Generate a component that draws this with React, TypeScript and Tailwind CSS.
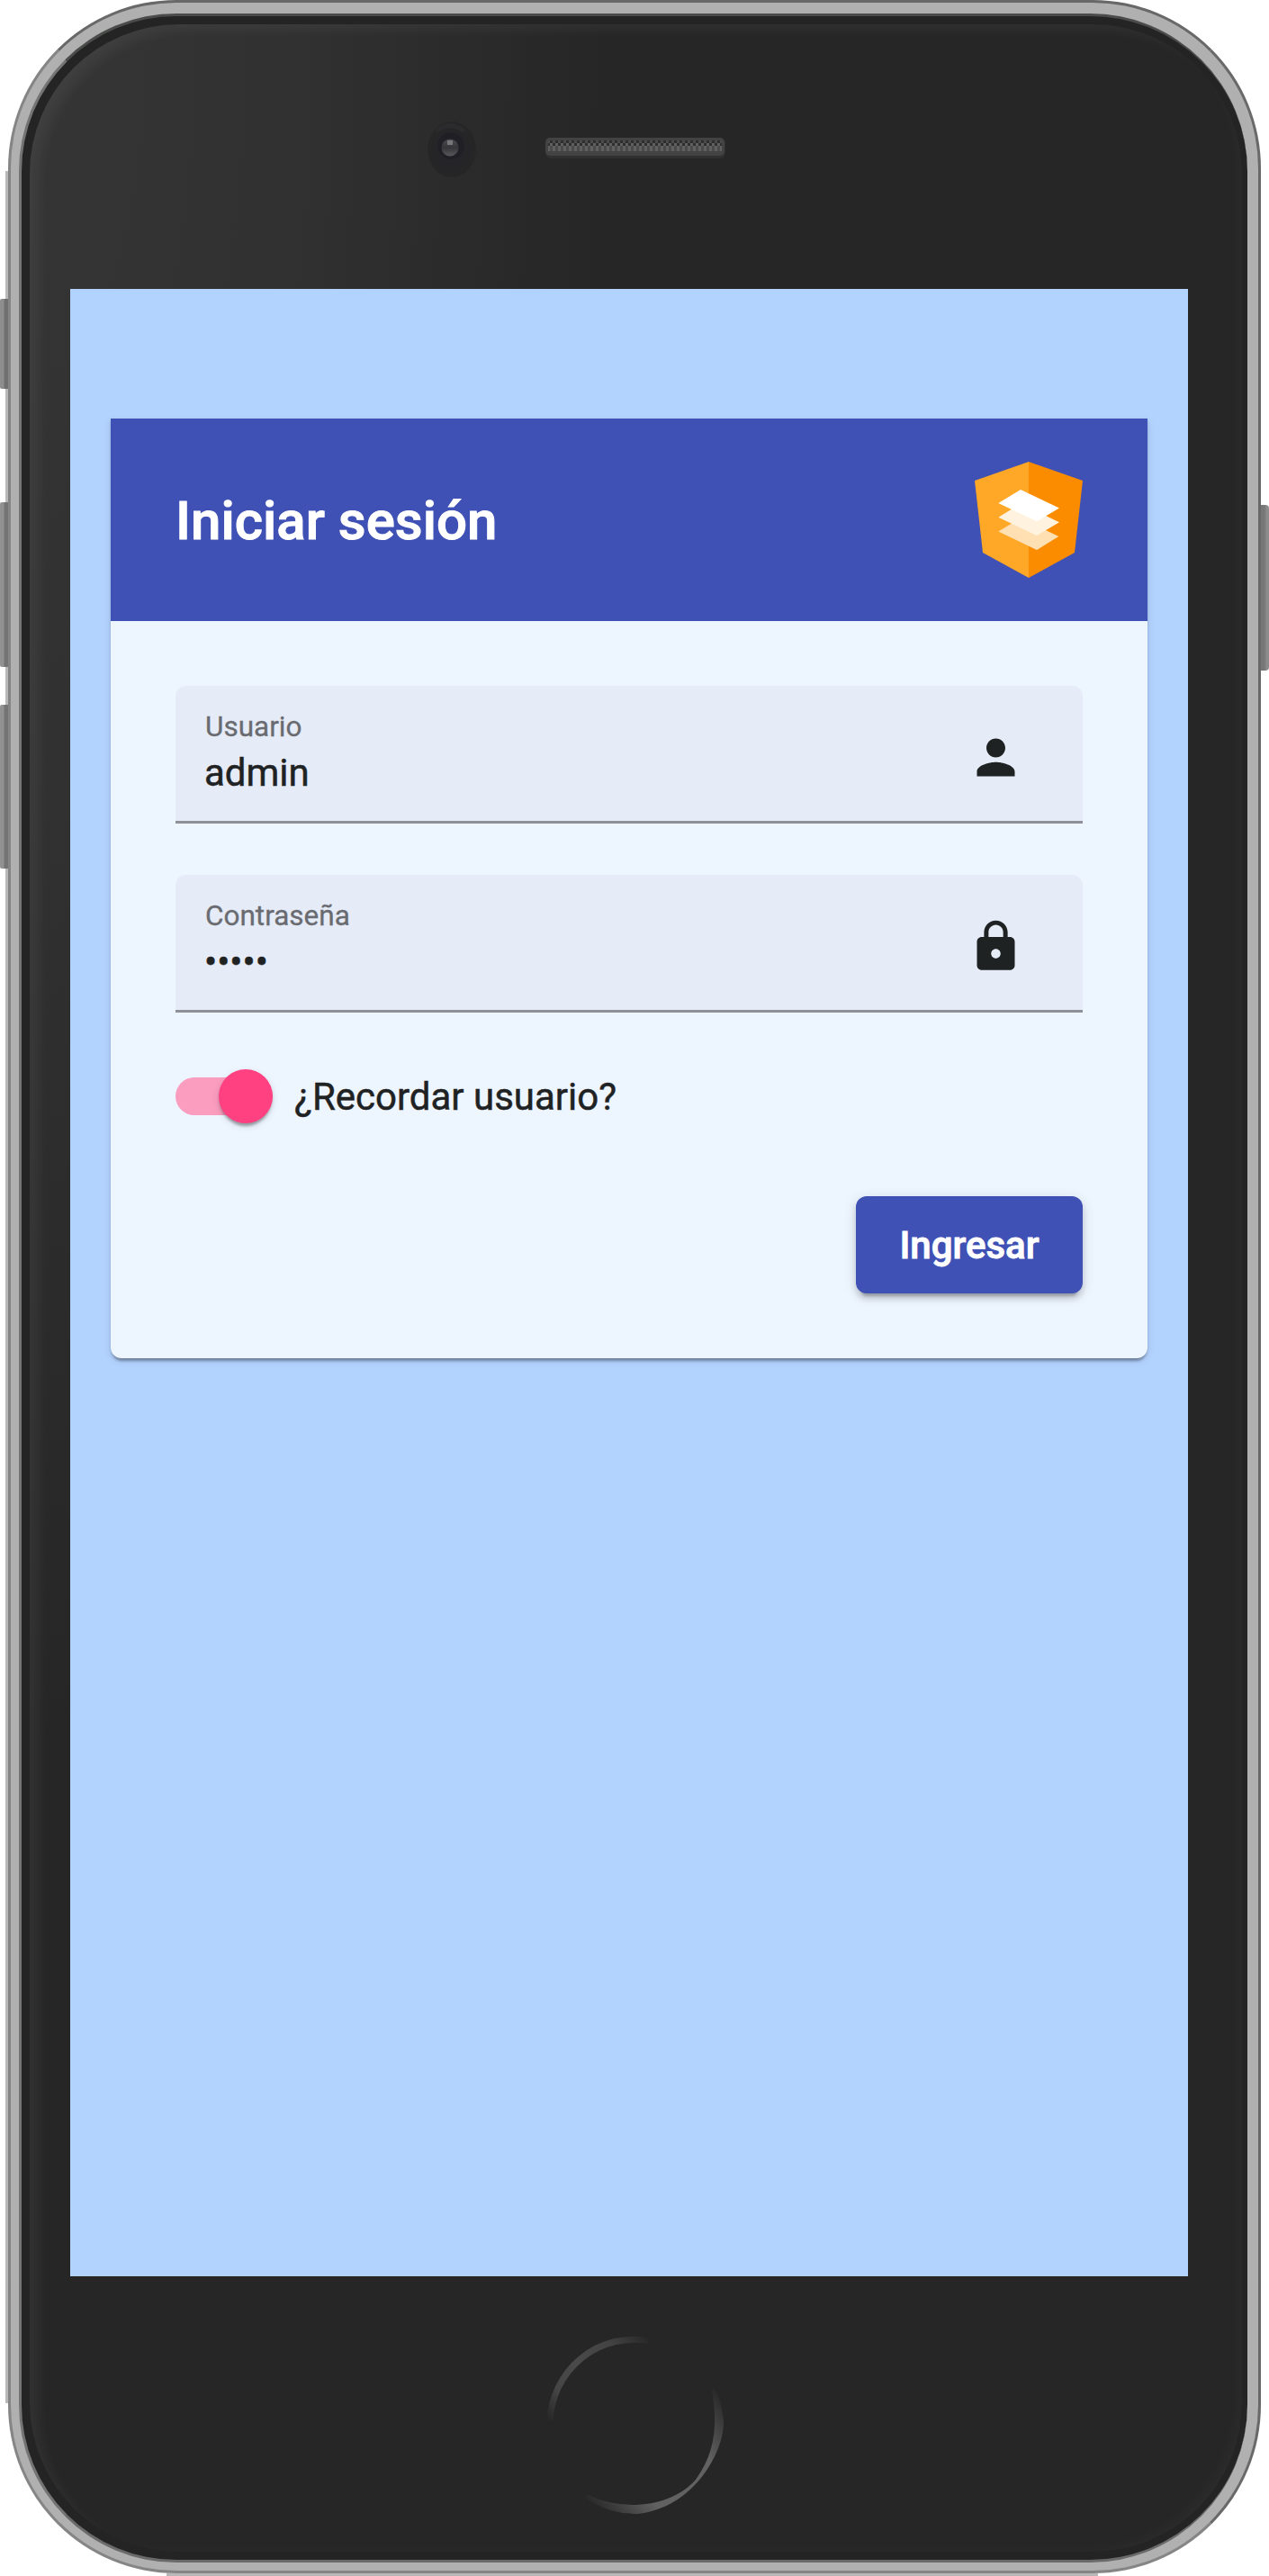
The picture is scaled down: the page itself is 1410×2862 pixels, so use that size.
import type { ReactNode } from "react";

function Logo() {
  return (
    <svg width="120" height="129" viewBox="0 0 120 129" aria-hidden="true">
      <path d="M60 0L0 21L9 101L60 129Z" fill="#ffa726" />
      <path d="M60 0L120 21L111 101L60 129Z" fill="#fb8c00" />
      <path d="M26.3 77.5L51 62.5L93.3 83L69 98Z" fill="#ffe0b2" />
      <path d="M26.3 61.7L51 46.5L94 67.3L69 82Z" fill="#fff3e0" />
      <path d="M26.3 46L51 31L94 51.5L69 66.3Z" fill="#fff" />
    </svg>
  );
}

function PersonIcon() {
  return (
    <svg width="63" height="63" viewBox="0 0 24 24" fill="#1f2223" aria-hidden="true">
      <path d="M12 12c2.21 0 4-1.79 4-4s-1.79-4-4-4-4 1.79-4 4 1.79 4 4 4zm0 2c-2.67 0-8 1.34-8 4v2h16v-2c0-2.66-5.33-4-8-4z" />
    </svg>
  );
}

function LockIcon() {
  return (
    <svg width="63" height="63" viewBox="0 0 24 24" fill="#1f2223" aria-hidden="true">
      <path d="M18 8h-1V6c0-2.76-2.24-5-5-5S7 3.24 7 6v2H6c-1.1 0-2 .9-2 2v10c0 1.1.9 2 2 2h12c1.1 0 2-.9 2-2V10c0-1.1-.9-2-2-2zm-6 9c-1.1 0-2-.9-2-2s.9-2 2-2 2 .9 2 2-.9 2-2 2zm3.1-9H8.9V6c0-1.71 1.39-3.1 3.1-3.1s3.1 1.39 3.1 3.1v2z" />
    </svg>
  );
}

type FieldProps = { label: string; value: string; type: string; icon: ReactNode };

function Field({ label, value, type, icon }: FieldProps) {
  return (
    <label className="flex h-[153px] items-start justify-between rounded-t-[12px] border-b-[3px] border-[#8f9198] bg-[#e5ebf7] pt-[27px] pr-[65px] pl-[32px]">
      <span className="flex flex-1 flex-col gap-[9px]">
        <span className="pt-px pl-px text-[31.5px] leading-[36px] text-[#696b70] [-webkit-text-stroke:0.3px_#696b70]">{label}</span>
        <input
          type={type}
          defaultValue={value}
          className="h-[48px] w-full bg-transparent p-0 text-[42px] leading-[48px] text-[#1f2223] outline-none [-webkit-text-stroke:0.5px_#1f2223]"
        />
      </span>
      <span className="mt-[21px]">{icon}</span>
    </label>
  );
}

function LoginCard() {
  return (
    <div className="rounded-b-[12px] bg-[#edf5ff] shadow-[0_6px_3px_-3px_rgba(0,0,0,0.2),0_3px_3px_rgba(0,0,0,0.14),0_3px_9px_rgba(0,0,0,0.12)]">
      <header className="flex h-[225px] items-center justify-between bg-[#3f51b5] px-[72px]">
        <h1 className="pt-[3px] text-[60px] font-medium text-white [-webkit-text-stroke:1px_#fff]">Iniciar sesión</h1>
        <Logo />
      </header>
      <form className="flex flex-col p-[72px]">
        <div className="flex flex-col gap-[57px]">
          <Field label="Usuario" value="admin" type="text" icon={<PersonIcon />} />
          <Field label="Contraseña" value="admin" type="password" icon={<LockIcon />} />
        </div>
        <div className="mt-[63px] flex h-[60px] items-center gap-6">
          <span className="flex h-[42px] w-[108px] items-center justify-end rounded-full bg-[#fa9dbf]">
            <span className="h-[60px] w-[60px] rounded-full bg-[#ff4081] shadow-[0_6px_3px_-3px_rgba(0,0,0,0.2),0_3px_3px_rgba(0,0,0,0.14),0_3px_9px_rgba(0,0,0,0.12)]" />
          </span>
          <span className="pt-px text-[42px] leading-[60px] text-[#1f2223] [-webkit-text-stroke:0.5px_#1f2223]">¿Recordar usuario?</span>
        </div>
        <button
          type="button"
          className="mt-[81px] h-[108px] w-[252px] self-end rounded-[12px] bg-[#3f51b5] text-[42px] font-medium text-white shadow-[0_9px_3px_-6px_rgba(0,0,0,0.2),0_6px_6px_rgba(0,0,0,0.14),0_3px_15px_rgba(0,0,0,0.12)] [-webkit-text-stroke:0.9px_#fff]"
        >
          Ingresar
        </button>
      </form>
    </div>
  );
}

function SpeakerAndCamera() {
  return (
    <svg width="400" height="110" viewBox="0 0 400 110" aria-hidden="true">
      <defs>
        <pattern id="mesh" width="6" height="12" patternUnits="userSpaceOnUse" y="1">
          <rect width="6" height="12" fill="#4b4b4b" />
          <path d="M0 0h3v3h-3zM3 9h3v3h-3z" fill="#2e2e2e" />
          <path d="M3 0h3v3h-3zM0 3h3v6h-3z" fill="#606060" />
        </pattern>
        <radialGradient id="lensHalo">
          <stop offset="0" stopColor="#222128" />
          <stop offset=".5" stopColor="#252529" />
          <stop offset="1" stopColor="#262626" />
        </radialGradient>
        <linearGradient id="lens" x2="0" y2="1">
          <stop offset="0" stopColor="#4c4c50" />
          <stop offset=".5" stopColor="#35353a" />
          <stop offset="1" stopColor="#58585c" />
        </linearGradient>
      </defs>
      <ellipse cx="62" cy="56" rx="27" ry="31" fill="url(#lensHalo)" />
      <path d="M45 36Q60 23 76 36" fill="none" stroke="#2b2b2e" strokeWidth="5" />
      <circle cx="61" cy="52" r="14.5" fill="#201f26" />
      <circle cx="60" cy="54" r="9.5" fill="url(#lens)" />
      <rect x="57" y="46" width="6" height="5" fill="#777779" />
      <rect x="166" y="43" width="200" height="23" rx="6" fill="#303030" />
      <rect x="166" y="43" width="199" height="20" rx="5" fill="#434343" />
      <rect x="169" y="46" width="193" height="12" fill="url(#mesh)" />
    </svg>
  );
}

function HomeButton() {
  return (
    <svg width="200" height="204" viewBox="0 0 200 204" aria-hidden="true">
      <defs>
        <linearGradient id="arcTop" gradientUnits="userSpaceOnUse" x1="5" y1="97" x2="115" y2="5">
          <stop offset="0" stopColor="#272727" />
          <stop offset=".2" stopColor="#454545" />
          <stop offset=".45" stopColor="#4a4a4a" />
          <stop offset=".75" stopColor="#434343" />
          <stop offset="1" stopColor="#272727" />
        </linearGradient>
        <linearGradient id="arcBottom" gradientUnits="userSpaceOnUse" x1="44" y1="184" x2="190" y2="62">
          <stop offset="0" stopColor="#272727" />
          <stop offset=".3" stopColor="#616161" />
          <stop offset=".7" stopColor="#626262" />
          <stop offset="1" stopColor="#282828" />
        </linearGradient>
      </defs>
      <path d="M6 97A93.5 95 0 0 1 115 8.5" fill="none" stroke="url(#arcTop)" strokeWidth="7" />
      <path
        d="M188 61Q196 70 199 98C200 130 168 193 104 201C86 201 68 198 46 184L48 180Q75 192 102 191C130 190 153 180 168 163C191 131 192 100 186 63Z"
        fill="url(#arcBottom)"
      />
    </svg>
  );
}

export default function App() {
  return (
    <div className="relative h-[2862px] w-[1410px] overflow-hidden bg-white pl-[9px] font-['Roboto',sans-serif]">
      <span className="absolute top-[332px] left-0 h-[100px] w-[9px] rounded-l-[2px] bg-linear-to-r from-[#8e8e8e] from-45% to-[#707070] to-55%" />
      <span className="absolute top-[558px] left-0 h-[183px] w-[9px] rounded-l-[2px] bg-linear-to-r from-[#929292] from-45% to-[#747474] to-55%" />
      <span className="absolute top-[783px] left-0 h-[182px] w-[9px] rounded-l-[2px] bg-linear-to-r from-[#929292] from-45% to-[#747474] to-55%" />
      <span className="absolute top-[561px] left-[1401px] h-[184px] w-[9px] rounded-tr-[4px] rounded-br-[4px] bg-linear-to-r from-[#777] from-45% to-[#8c8c8c] to-70%" />
      <span className="absolute top-[190px] left-[6px] h-[142px] w-[3px] bg-[#b8b8b8]" />
      <span className="absolute top-[432px] left-[6px] h-[126px] w-[3px] bg-[#b8b8b8]" />
      <span className="absolute top-[741px] left-[6px] h-[42px] w-[3px] bg-[#b8b8b8]" />
      <span className="absolute top-[965px] left-[6px] h-[1705px] w-[3px] bg-[#b8b8b8]" />
      <span className="absolute top-[2859px] left-[185px] h-[3px] w-[1035px] bg-[#b8b8b8]" />

      <div className="h-[2859px] w-[1392px] rounded-[187px] border-[3px] border-t-[#686868] border-r-[#696969] border-b-[#858585] border-l-[#858585] bg-[#b0b0b0] pt-3 pr-3 pb-[9px] pl-[9px]">
        <div className="h-full rounded-[175px] border-t-[3px] border-b-[3px] border-l-[3px] border-t-[#4a4c4a] border-b-[#6a6a6a] border-l-[#747474] bg-[#242424] pt-[9px] pr-[6px] pb-[9px] pl-[9px]">
          <div className="flex h-full flex-col rounded-[166px] bg-[radial-gradient(ellipse_640px_1900px_at_0_0,#353535_0%,#313131_45%,#262626_100%)] pl-[45px] shadow-[inset_14px_10px_14px_-4px_rgba(255,255,255,0.055),inset_-14px_-10px_14px_-8px_rgba(255,255,255,0.025)]">
            <div className="flex h-[294px] pt-[83px] pl-[362px]">
              <SpeakerAndCamera />
            </div>
            <main className="h-[2208px] w-[1242px] shrink-0 bg-[#b3d3ff] px-[45px] pt-[144px]">
              <LoginCard />
            </main>
            <div className="flex pt-[63px] pl-[527px]">
              <HomeButton />
            </div>
          </div>
        </div>
      </div>
    </div>
  );
}
